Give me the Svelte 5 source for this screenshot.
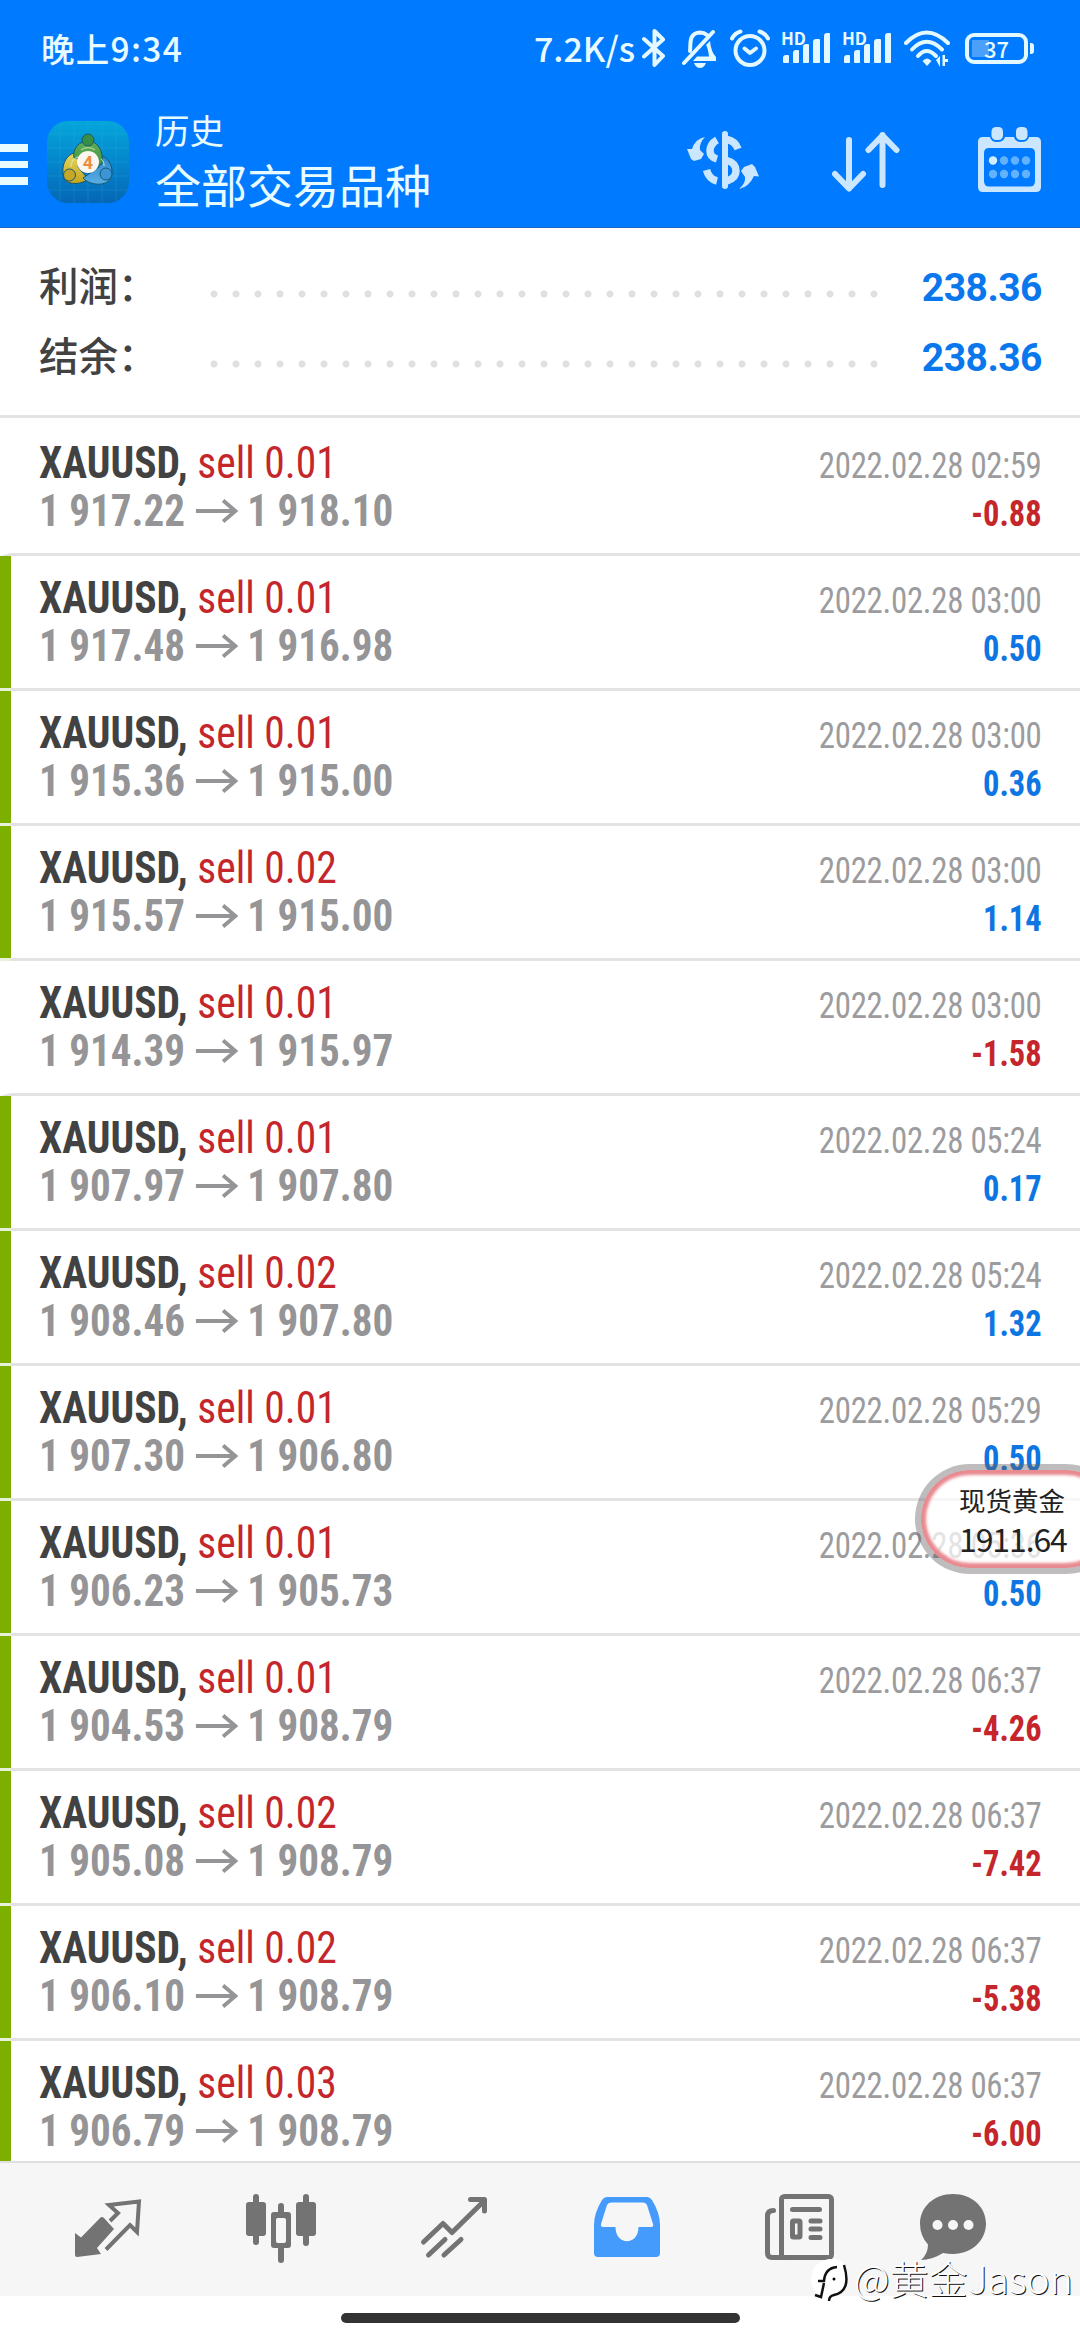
<script>
  const summary = [
    { label: '利润：', value: '238.36' },
    { label: '结余：', value: '238.36' }
  ];

  const deals = [
    { volume: '0.01', open: '1 917.22', close: '1 918.10', time: '02:59', profit: '-0.88', marked: false },
    { volume: '0.01', open: '1 917.48', close: '1 916.98', time: '03:00', profit: '0.50', marked: true },
    { volume: '0.01', open: '1 915.36', close: '1 915.00', time: '03:00', profit: '0.36', marked: true },
    { volume: '0.02', open: '1 915.57', close: '1 915.00', time: '03:00', profit: '1.14', marked: true },
    { volume: '0.01', open: '1 914.39', close: '1 915.97', time: '03:00', profit: '-1.58', marked: false },
    { volume: '0.01', open: '1 907.97', close: '1 907.80', time: '05:24', profit: '0.17', marked: true },
    { volume: '0.02', open: '1 908.46', close: '1 907.80', time: '05:24', profit: '1.32', marked: true },
    { volume: '0.01', open: '1 907.30', close: '1 906.80', time: '05:29', profit: '0.50', marked: true },
    { volume: '0.01', open: '1 906.23', close: '1 905.73', time: '05:36', profit: '0.50', marked: true },
    { volume: '0.01', open: '1 904.53', close: '1 908.79', time: '06:37', profit: '-4.26', marked: true },
    { volume: '0.02', open: '1 905.08', close: '1 908.79', time: '06:37', profit: '-7.42', marked: true },
    { volume: '0.02', open: '1 906.10', close: '1 908.79', time: '06:37', profit: '-5.38', marked: true },
    { volume: '0.03', open: '1 906.79', close: '1 908.79', time: '06:37', profit: '-6.00', marked: true }
  ];

  const signalBars = [8, 13, 19, 24, 30];
  const calendarDots = [0, 1, 2, 3, 4, 5, 6, 7];
</script>

<div class="screen">
  <header>
    <div class="status-bar">
      <span class="clock">晚上9:34</span>
      <div class="status-icons">
        <span class="speed">7.2K/s</span>
        <svg class="bluetooth" width="24" height="40" viewBox="0 0 24 40">
          <path d="M2 11 L21 28 L12.5 37 V3 L21 11.5 L2 28.5" />
        </svg>
        <svg class="bell" width="36" height="40" viewBox="0 0 36 40">
          <path d="M8 23 C9 17 6 5 18 4.5 Q22 4.5 25 7" />
          <path d="M2 35 L31 4" />
          <path class="solid" d="M28 13 Q29 24 34 29 V33 H11 L15 28.5 H27 Q26 20 24 17 Z" />
          <path class="solid" d="M12 35 H24 Q22 40 18 40 Q14 40 12 35 Z" />
        </svg>
        <svg class="alarm" width="40" height="40" viewBox="0 0 40 40">
          <circle cx="20" cy="22.5" r="14.5" />
          <path d="M14.5 20.5 L20 25 L26 20.5" />
          <path d="M2 10.5 Q5 5 10.5 3.5 M29.5 3.5 Q35 5 38 10.5" />
        </svg>
        {#each [1, 2] as sim}
          <div class="signal">
            <span class="hd">HD</span>
            <div class="bars">
              {#each signalBars as height}
                <i style="height: {height}px"></i>
              {/each}
            </div>
          </div>
        {/each}
        <svg class="wifi" width="46" height="38" viewBox="0 0 46 38">
          <path d="M2 14 Q22.5 -7 44 14" />
          <path d="M8 20.5 Q22.5 5 38 20.5" />
          <path d="M14 27 Q22.5 17 32 27" />
          <path class="solid" d="M18.5 32 Q23 27 27.5 32 L23 37 Z" />
          <path class="solid" d="M32 31 L36 27 V38 Z M38.5 26 H41 V30 H44 V33 H41 V37 H38.5 Z" />
        </svg>
        <div class="battery"><span>37</span></div>
      </div>
    </div>

    <div class="toolbar">
      <div class="menu"><i></i><i></i><i></i></div>
      <svg class="app-icon" width="82" height="82" viewBox="0 0 82 82">
        <defs>
          <linearGradient id="sky" x1="0" y1="0" x2="0" y2="1">
            <stop offset="0" stop-color="#05a6da" />
            <stop offset="0.55" stop-color="#0483cb" />
            <stop offset="1" stop-color="#0566b5" />
          </linearGradient>
          <linearGradient id="green" x1="0" y1="0" x2="0" y2="1">
            <stop offset="0" stop-color="#5fae55" />
            <stop offset="1" stop-color="#3f9440" />
          </linearGradient>
          <linearGradient id="gold" x1="0" y1="0" x2="0" y2="1">
            <stop offset="0" stop-color="#e3d862" />
            <stop offset="1" stop-color="#c6a51d" />
          </linearGradient>
          <linearGradient id="blue" x1="0" y1="0" x2="0" y2="1">
            <stop offset="0" stop-color="#2c86cc" />
            <stop offset="1" stop-color="#58aee4" />
          </linearGradient>
        </defs>
        <rect width="82" height="82" rx="21" fill="url(#sky)" />
        <path class="grid" d="M13 2 V80 M27 0 V82 M41 0 V82 M55 0 V82 M69 2 V80 M2 13 H80 M0 27 H82 M0 41 H82 M0 55 H82 M2 69 H80" />
        <g stroke="#18586f" stroke-width="1">
          <path fill="url(#gold)" d="M33 31 C20 31 13 43 17 58 C22 65 36 63 41 58 L31 46 Z" />
          <path fill="url(#blue)" d="M52 34 C63 36 68 49 63 58 C58 66 42 64 36 57 L52 46 Z" />
          <path fill="url(#green)" d="M27 37 C25 27 33 20 41 20 C50 20 57 29 55 43 L47 46 L32 38 Z" />
          <circle cx="41" cy="19" r="6" fill="#378e45" />
          <circle cx="22.5" cy="54" r="6" fill="#c7a728" />
          <circle cx="59" cy="53" r="6" fill="#3a94d6" />
        </g>
        <path d="M34 29 Q41 24 48 29 M24 46 Q24 38 31 36 M57 45 Q57 40 54 38" fill="none" stroke="#dcefc0" stroke-opacity="0.6" stroke-width="1.5" />
        <circle cx="41" cy="41" r="11" fill="#fbf6f0" />
        <text x="41" y="47.5">4</text>
      </svg>
      <div class="titles">
        <div class="title">历史</div>
        <div class="subtitle">全部交易品种</div>
      </div>
      <div class="actions">
        <svg width="74" height="60" viewBox="0 0 74 60">
          <g class="dollar">
            <path d="M31 11 Q24 15 24 22 Q24 28 31 30" />
            <path d="M20.5 41 Q23 50 31 52" />
            <path d="M41 10.5 Q49 12 52 20" />
            <path d="M41 31.5 Q50 34 50 42 Q50 49 41 52" />
          </g>
          <path class="dollar-bar" d="M39 5 V57" />
          <path class="swap" d="M19 8 Q13 14 14 21 L18 25 L15 30 L8 32 L5 30 L1 20 L6 20 Q9 10 19 8 Z" />
          <path class="swap" d="M53 60 Q60 54 59 48 L55 42 L58 38 L66 35 L69 38 L73 47.5 L68 47 Q63 58 53 60 Z" />
        </svg>
        <svg class="sort" width="68" height="62" viewBox="0 0 68 62">
          <path d="M17 9 V57 M3 43 L17 57.5 L31 43" />
          <path d="M50.5 54 V4 M36.5 19 L50.5 4.5 L64.5 19" />
        </svg>
        <svg class="calendar" width="64" height="66" viewBox="0 0 64 66">
          <path
            fill-rule="evenodd"
            d="M5 10 H12 Q13 15 19 15 Q26 15 27 10 H36 Q37 15 43.5 15 Q50 15 51 10 H58 Q63 10 63 15 V60 Q63 65 58 65 H5 Q0 65 0 60 V15 Q0 10 5 10 Z M11 21 Q6 21 6 26 V54 Q6 59.5 11 59.5 H52 Q57 59.5 57 54 V26 Q57 21 52 21 Z"
          />
          <rect x="13.5" y="0" width="11.5" height="13" rx="4.5" />
          <rect x="38" y="0" width="11.5" height="13" rx="4.5" />
          {#each calendarDots as dot}
            <circle
              class:current={dot === 0}
              class="day"
              cx={15 + (dot % 4) * 11}
              cy={dot < 4 ? 33.5 : 47}
              r="4.2"
            />
          {/each}
        </svg>
      </div>
    </div>
  </header>

  <section class="summary">
    {#each summary as row}
      <div class="summary-row">
        <span class="label">{row.label}</span>
        <span class="dots"></span>
        <span class="total">{row.value}</span>
      </div>
    {/each}
  </section>

  <main>
    {#each deals as deal}
      <div class="deal" class:marked={deal.marked}>
        <div class="deal-left">
          <div class="order"><b>XAUUSD,</b> <span class="sell">sell {deal.volume}</span></div>
          <div class="prices">
            <span>{deal.open}</span>
            <svg width="45" height="24" viewBox="0 0 45 24">
              <path d="M0 12 H42 M29 1.5 L42 12 L29 22.5" />
            </svg>
            <span>{deal.close}</span>
          </div>
        </div>
        <div class="deal-right">
          <div class="time">2022.02.28 {deal.time}</div>
          <div class="profit" class:loss={deal.profit.startsWith('-')}>{deal.profit}</div>
        </div>
      </div>
    {/each}
  </main>

  <nav>
    <svg width="72" height="72" viewBox="0 0 72 72">
      <path class="fill" d="M3 41 L9 45.5 L28 26 Q30 24 32 26 L42 37 L25 56 L29 62 L5 65 Q3 65 3 63 Z" />
      <path class="line" d="M38 29 L46 21 L37 13 L67 9.5 L65 40 L58 33 L34 57.5" />
    </svg>
    <svg width="72" height="72" viewBox="0 0 72 72">
      <rect class="fill" x="1" y="10" width="20" height="34" rx="3" />
      <rect class="fill" x="51" y="10" width="20" height="34" rx="3" />
      <path class="wick" d="M11 5 V50 M61 5 V51 M36 14 V22 M36 56 V68" />
      <path class="fill" fill-rule="evenodd" d="M29 20 H43 Q46 20 46 23 V53 Q46 56 43 56 H29 Q26 56 26 53 V23 Q26 20 29 20 Z M32.5 26 Q31 26 31 27.5 V49 Q31 51 32.5 51 H39 Q41 51 41 49 V27.5 Q41 26 39 26 Z" />
    </svg>
    <svg width="72" height="72" viewBox="0 0 72 72">
      <path class="trend" d="M5.5 50 L25 31.5 L34 40.5 L66 9 M52.5 7.5 H66.5 V19" />
      <path class="trend" d="M10.5 63 L27 47.5 M26 63 L43 47.5" />
    </svg>
    <svg class="active" width="72" height="72" viewBox="0 0 72 72">
      <path fill-rule="evenodd" d="M16 5 H56 Q59 5 61 8 Q69 21 69 33 V61 Q69 65 65 65 H7 Q3 65 3 61 V33 Q3 21 11 8 Q13 5 16 5 Z M20 10.5 Q17 10.5 16 13 L10 32 Q9.5 35 12 35 H24.5 C24.5 54 47.5 54 47.5 35 H60 Q63 35 62 32 L56 13 Q55 10.5 52 10.5 Z" />
    </svg>
    <svg class="news" width="72" height="72" viewBox="0 0 72 72">
      <rect x="17.5" y="4.5" width="50" height="61" rx="3" />
      <path d="M9.5 18.5 Q3.5 18.5 3.5 24 V61 Q3.5 65.5 8 65.5 H20" />
      <path d="M28.5 17.5 H55.5 M47 29 H56 M47 37 H56 M47 45.5 H56" />
      <rect x="28.5" y="29" width="7.5" height="16" rx="1" />
    </svg>
    <svg width="72" height="72" viewBox="0 0 72 72">
      <path class="fill" d="M36 2 C55 2 69 15 69 31.5 C69 48 55 62 36 62 Q31 62 26 61 Q15 68 4 68 Q11 62 11 52.5 Q3 44 3 31.5 C3 15 17 2 36 2 Z" />
      <circle class="hole" cx="20.5" cy="33" r="5" />
      <circle class="hole" cx="36" cy="33" r="5" />
      <circle class="hole" cx="51.5" cy="33" r="5" />
    </svg>
  </nav>

  <footer><i></i></footer>

  <div class="quote">
    <div class="quote-name">现货黄金</div>
    <div class="quote-price">1911.64</div>
  </div>

  <div class="watermark">
    <svg width="42" height="44" viewBox="0 0 42 44">
      <path class="badge" d="M19 0 H24 Q38 2 38 19 Q38 36 22 38 L18 43 L19 38 Q1 36 1 20 Q2 3 19 0 Z" />
      <path class="ink" d="M34 6 Q42 32 24 36 Q19 37 19 42" />
      <path class="ink" d="M8 22 H14 Q15 9 27 8 M14 24 L11 38 L5 36" />
      <circle cx="24" cy="20" r="1.5" />
    </svg>
    <span>@黄金Jason</span>
  </div>
</div>

<style>
  :global(body) {
    margin: 0;
    background: #fff;
  }

  .screen {
    position: relative;
    display: flex;
    flex-direction: column;
    width: 1080px;
    height: 2340px;
    overflow: hidden;
    background: #fff;
    font-family: 'Noto Sans CJK SC', 'Noto Sans', sans-serif;
  }

  svg {
    display: block;
    flex: none;
  }

  header {
    box-sizing: border-box;
    height: 228px;
    flex: none;
    background: #007aff;
    border-bottom: 1px solid #1a66c4;
    color: #e8fbff;
  }

  .status-bar {
    display: flex;
    align-items: center;
    justify-content: space-between;
    height: 96px;
    padding: 0 48px 0 41px;
  }

  .clock {
    margin-top: -2px;
    font-size: 33.5px;
    font-weight: 500;
    letter-spacing: 1.3px;
  }

  .status-icons {
    display: flex;
    align-items: center;
    fill: none;
    stroke: #e3f8ff;
    stroke-width: 4;
    stroke-linecap: round;
    stroke-linejoin: round;
  }

  .solid {
    fill: #e3f8ff;
    stroke: none;
  }

  .speed {
    margin: -2px 7px 0 0;
    font-size: 34px;
    font-weight: 500;
  }

  .bluetooth {
    margin-right: 16px;
  }

  .bell {
    margin-right: 12px;
  }

  .alarm {
    margin-right: 11px;
  }

  .signal {
    position: relative;
    width: 49px;
    height: 32px;
    margin-right: 12px;
  }

  .hd {
    position: absolute;
    top: 0;
    left: 0;
    font-size: 17px;
    font-weight: 700;
    line-height: 12px;
  }

  .bars {
    display: flex;
    align-items: flex-end;
    justify-content: flex-end;
    gap: 4px;
    height: 31px;
  }

  .bars i {
    width: 6.3px;
    border-radius: 3px 1px 1px 1px;
    background: #e3f8ff;
  }

  .wifi {
    margin: 0 15px 0 1px;
  }

  .battery {
    position: relative;
    box-sizing: border-box;
    width: 63px;
    height: 31px;
    margin-right: 4px;
    border: 4px solid #e3f8ff;
    border-radius: 9px;
    background: linear-gradient(#4aa0fb, #4aa0fb) 3px center / 17px 17px no-repeat;
    font-size: 22px;
    font-weight: 500;
    line-height: 22px;
    text-align: center;
  }

  .battery::after {
    content: '';
    position: absolute;
    top: 6px;
    right: -10px;
    width: 4px;
    height: 11px;
    border-radius: 0 3px 3px 0;
    background: #e3f8ff;
  }

  .toolbar {
    display: flex;
    align-items: flex-start;
    height: 131px;
  }

  .menu {
    display: flex;
    flex-direction: column;
    gap: 9px;
    width: 28px;
    margin: 48px 19px 0 0;
  }

  .menu i {
    height: 7.5px;
    background: #e8fbff;
  }

  .app-icon {
    margin-top: 25px;
  }

  .app-icon text {
    fill: #ee8d3c;
    font: 700 18px Roboto, sans-serif;
    text-anchor: middle;
  }

  .grid {
    fill: none;
    stroke: #38b4e6;
    stroke-opacity: 0.22;
  }

  .titles {
    margin: 10px 0 0 26px;
  }

  .title {
    font-size: 34.5px;
    line-height: 46px;
  }

  .subtitle {
    font-size: 46px;
    line-height: 62px;
  }

  .actions {
    display: flex;
    align-items: flex-start;
    gap: 72px;
    margin: 31px 38px 0 auto;
    fill: #cbe7ff;
  }

  .actions svg:first-child {
    margin-top: 2px;
  }

  .dollar,
  .dollar-bar {
    fill: none;
    stroke: #cbe7ff;
    stroke-width: 7.5;
  }

  .dollar-bar {
    stroke-width: 6;
    stroke-linecap: round;
  }

  .sort {
    margin-top: 4px;
    fill: none;
    stroke: #cbe7ff;
    stroke-width: 6;
    stroke-linecap: round;
    stroke-linejoin: round;
  }

  .calendar {
    margin-left: 6px;
  }

  .day {
    fill: #62b2ff;
  }

  .day.current {
    fill: #d3efff;
  }

  .summary {
    box-sizing: border-box;
    height: 190px;
    flex: none;
    padding-top: 22px;
    border-bottom: 3px solid #e3e3e3;
  }

  .summary-row {
    display: flex;
    align-items: center;
    height: 70px;
    padding: 0 38px 0 39px;
  }

  .label {
    width: 164px;
    margin-top: -2px;
    color: #424242;
    font-size: 39.5px;
    font-weight: 500;
    line-height: 70px;
  }

  .dots {
    width: 682px;
    height: 8px;
    margin-top: 18px;
    background: radial-gradient(circle at 11px 4px, #e0e0e0 3px, transparent 4px) 0 0 / 22px 8px;
  }

  .total {
    margin: 5px 0 0 auto;
    color: #0a78ec;
    font-family: Roboto, sans-serif;
    font-size: 39px;
    font-weight: 700;
    letter-spacing: -0.5px;
    line-height: 70px;
  }

  main {
    height: 1743px;
    flex: none;
    box-sizing: border-box;
    padding-top: 3px;
    overflow: hidden;
    font-family: 'Roboto Condensed', Roboto, sans-serif;
  }

  .deal {
    display: flex;
    justify-content: space-between;
    box-sizing: border-box;
    height: 135px;
    padding: 19px 38px 0 28px;
    border-left: 11px solid transparent;
    border-bottom: 3px solid #e3e3e3;
  }

  .deal.marked {
    border-left-color: #7caf00;
    border-image: linear-gradient(#7caf00 132px, #e6f2d8 132px) 0 0 0 11 / 0 0 0 11px;
    background: linear-gradient(#e3e3e3, #e3e3e3) bottom / 100% 3px no-repeat border-box;
  }

  .order {
    font-size: 43.5px;
    line-height: 48px;
    white-space: nowrap;
    transform: scaleX(0.955);
    transform-origin: left;
  }

  .order b {
    color: #424242;
  }

  .sell {
    color: #c4262b;
  }

  .prices {
    display: flex;
    align-items: center;
    color: #959597;
    font-size: 43.5px;
    font-weight: 700;
    line-height: 48px;
    transform: scaleX(0.944);
    transform-origin: left;
  }

  .prices svg {
    margin: -2px 10px 0 11px;
    fill: none;
    stroke: #959597;
    stroke-width: 4;
  }

  .deal-right {
    padding-top: 2px;
    text-align: right;
    transform: scaleX(0.9);
    transform-origin: right;
  }

  .time {
    color: #9c9c9e;
    font-size: 36.5px;
    line-height: 48px;
    letter-spacing: -0.3px;
  }

  .profit {
    color: #0e76e2;
    font-size: 36px;
    font-weight: 700;
    line-height: 48px;
  }

  .profit.loss {
    color: #c4262b;
  }

  nav {
    display: flex;
    gap: 101px;
    box-sizing: border-box;
    height: 135px;
    flex: none;
    padding: 29px 0 0 72px;
    border-top: 2px solid #dfdfdf;
    background: #f6f6f7;
  }

  nav svg:last-child {
    margin-left: -20px;
  }

  .fill {
    fill: #737373;
  }

  .line,
  .wick,
  .trend,
  .news {
    fill: none;
    stroke: #737373;
    stroke-width: 5;
    stroke-linecap: round;
    stroke-linejoin: round;
  }

  .line {
    stroke-width: 4;
    stroke-linecap: butt;
    stroke-linejoin: miter;
  }

  .wick {
    stroke-width: 6;
  }

  .active {
    fill: #459bfc;
  }

  .hole {
    fill: #f6f6f7;
  }

  footer {
    display: flex;
    justify-content: center;
    padding-top: 17px;
  }

  footer i {
    width: 399px;
    height: 10px;
    border-radius: 5px;
    background: #333;
  }

  .quote {
    position: absolute;
    top: 1464px;
    left: 915px;
    box-sizing: border-box;
    width: 206px;
    height: 110px;
    padding: 12px 0 0 38px;
    border: 6px solid rgba(100, 95, 95, 0.42);
    border-radius: 55px;
    background: rgba(255, 255, 255, 0.72) padding-box;
    box-shadow: inset 0 0 3px 5px #e88a90;
    color: #222;
  }

  .quote-name {
    font-size: 26.5px;
    line-height: 36px;
  }

  .quote-price {
    font-size: 32px;
    line-height: 40px;
    letter-spacing: -1.1px;
  }

  .watermark {
    position: absolute;
    top: 2251px;
    left: 810px;
    display: flex;
    align-items: center;
    gap: 2px;
    color: #fff;
    font-size: 39px;
    font-weight: 300;
    line-height: 48px;
    text-shadow: 1px 1px 0 #111;
    white-space: nowrap;
  }

  .watermark svg {
    margin-top: 8px;
  }

  .badge {
    fill: #fff;
  }

  .ink {
    fill: none;
    stroke: #111;
    stroke-width: 2.5;
  }
</style>
